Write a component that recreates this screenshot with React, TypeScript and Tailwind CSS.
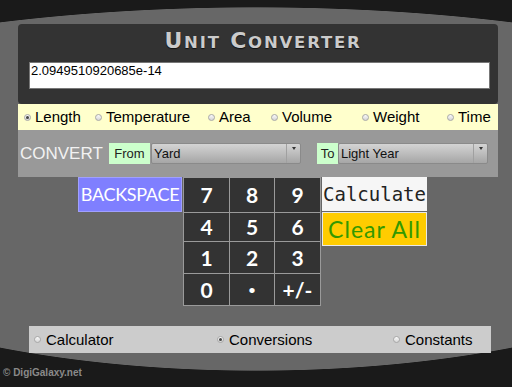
import React from "react";

const Radio = ({ checked }: { checked?: boolean }) => (
  <span className="inline-flex w-[7px] h-[7px] rounded-full border border-[#a8a8a8] bg-gradient-to-b from-[#fafafa] to-[#d6d6d6] items-center justify-center shrink-0">
    {checked ? <span className="block w-[3px] h-[3px] rounded-full bg-[#444]" /> : null}
  </span>
);

const topItems = [
  { label: "Length", w: "w-[71px]", checked: true },
  { label: "Temperature", w: "w-[113px]" },
  { label: "Area", w: "w-[63px]" },
  { label: "Volume", w: "w-[91px]" },
  { label: "Weight", w: "w-[85px]" },
  { label: "Time", w: "w-[45px]" },
];

const bottomItems = [
  { label: "Calculator", w: "w-[183px]" },
  { label: "Conversions", w: "w-[176px]", checked: true },
  { label: "Constants", w: "w-[90px]" },
];

const keys = ["7", "8", "9", "4", "5", "6", "1", "2", "3", "0", "•", "+/-"];

const Select = ({ value }: { value: string }) => (
  <div className="flex h-[21px] w-[150px] border border-[#8a8a8a] rounded-[2px] bg-gradient-to-b from-[#d4d4d4] to-[#a6a6a6]">
    <div className="flex-1 pl-[2px] text-[13px] leading-[19px] text-[#111]">{value}</div>
    <div className="w-[14px] border-l border-[#a0a0a0] flex justify-center pt-[3px]">
      <span className="block w-0 h-0 border-l-[2px] border-r-[2px] border-t-[3px] border-l-transparent border-r-transparent border-t-[#333]" />
    </div>
  </div>
);

export default function App() {
  return (
    <div
      className="w-[512px] h-[387px] overflow-hidden bg-[#1a1a1a] [background-image:radial-gradient(ellipse_644px_182px_at_50%_100%,#676767_99.6%,#1a1a1a_100%),radial-gradient(ellipse_526px_182px_at_50%_0%,#676767_99.6%,#1a1a1a_100%)] [background-size:100%_189px,100%_198px] [background-position:top,bottom] [background-repeat:no-repeat] pt-[24px]"
      style={{ fontFamily: '"Liberation Sans", Arial, sans-serif' }}
    >
      {/* main panel */}
      <div className="mx-[18px] w-[480px]">
        <div className="h-[80px] bg-[#333333] rounded-[4px] pt-[6px]">
          <div
            className="text-center pl-[10px] leading-[22px] font-bold text-[#cbcbcb] tracking-[1.8px] [text-shadow:0_1px_1px_#111]"
            style={{ fontFamily: '"DejaVu Sans", sans-serif' }}
          >
            <span className="text-[22px]">U</span>
            <span className="text-[16.5px]">NIT</span>
            <span className="text-[22px]"> C</span>
            <span className="text-[16.5px]">ONVERTER</span>
          </div>
          <div className="mt-[8px] ml-[11px] h-[27px] w-[461px] border border-[#777] bg-white pl-[1px] text-[13px] leading-[15px] text-black">
            2.0949510920685e-14
          </div>
        </div>
        <div className="h-[26px] bg-[#ffffcc] flex items-center pl-[6px] text-[15px] text-black">
          {topItems.map((it) => (
            <div key={it.label} className={`${it.w} flex items-center gap-[4px]`}>
              <Radio checked={it.checked} />
              <span className="leading-[18px]">{it.label}</span>
            </div>
          ))}
        </div>
        <div className="h-[47px] bg-[#999999] pt-[13px] flex items-start pl-[2px]">
          <div className="w-[89px] h-[21px] flex items-center text-[17px] text-[#f2f2f2]">CONVERT</div>
          <div className="w-[41px] h-[21px] bg-[#ccffcc] text-[13px] text-[#222] flex items-center justify-center">From</div>
          <div className="ml-[1px]">
            <Select value="Yard" />
          </div>
          <div className="ml-[16px] w-[21px] h-[21px] bg-[#ccffcc] text-[13px] text-[#222] flex items-center justify-center">To</div>
          <div>
            <Select value="Light Year" />
          </div>
        </div>
      </div>

      {/* keypad */}
      <div className="flex items-start pl-[78px]">
        <div
          className="w-[104px] h-[35px] bg-[#7f7fff] border border-[#a0a0ff] text-white text-[18px] tracking-[-0.3px] flex items-center justify-center"
          style={{ fontFamily: "Lato, sans-serif" }}
        >
          BACKSPACE
        </div>
        <div className="ml-[1px] grid grid-cols-[45px_44px_45px] grid-rows-[34px_28px_31px_31px] gap-[1px] p-[1px] bg-[#9a9a9a]">
          {keys.map((k) => (
            <div
              key={k}
              className={`bg-[#333333] text-white font-bold flex items-center justify-center ${
                k === "•" ? "text-[12px]" : "text-[21px]"
              }`}
              style={{ fontFamily: "Lato, sans-serif" }}
            >
              {k}
            </div>
          ))}
        </div>
        <div className="ml-[1px] flex flex-col">
          <div
            className="w-[105px] h-[34px] bg-[#f6f6f6] text-[#222] text-[19px] flex items-center justify-center"
            style={{ fontFamily: '"DejaVu Sans Mono", monospace' }}
          >
            Calculate
          </div>
          <div
            className="mt-[1px] w-[105px] h-[34px] bg-[#ffcc00] border border-[#e8e8e8] text-[#339900] text-[23px] tracking-[1px] flex items-center justify-center"
            style={{ fontFamily: "Lato, sans-serif" }}
          >
            Clear All
          </div>
        </div>
      </div>

      {/* bottom bar */}
      <div className="mt-[20px] ml-[29px] w-[462px] h-[27px] bg-[#cccccc] flex items-center pl-[5px] text-[15px] text-black">
        {bottomItems.map((it) => (
          <div key={it.label} className={`${it.w} flex items-center gap-[5px]`}>
            <Radio checked={it.checked} />
            <span className="leading-[18px]">{it.label}</span>
          </div>
        ))}
      </div>

      <div className="mt-[14px] pl-[3px] text-[10px] leading-[12px] font-bold text-[#8a8a8a]">© DigiGalaxy.net</div>
    </div>
  );
}
